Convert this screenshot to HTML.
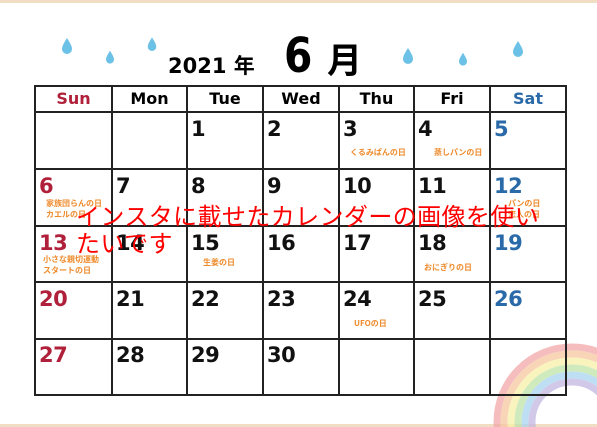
<!DOCTYPE html>
<html><head><meta charset="utf-8"><style>
*{margin:0;padding:0;box-sizing:border-box}
html,body{width:597px;height:427px;overflow:hidden}
body{background:#fff;position:relative;font-family:"Liberation Sans","Noto Sans CJK JP",sans-serif}
.a{position:absolute}
.n{position:absolute;font-weight:bold;font-size:21px;line-height:21px;color:#111;font-family:"DejaVu Sans","Liberation Sans",sans-serif;letter-spacing:-0.5px}
.r{color:#b0203a}.b{color:#2a6aa8}
.e{position:absolute;font-size:8px;font-weight:bold;color:#ee8a2a;line-height:11px;font-family:"Noto Sans CJK JP",sans-serif;white-space:nowrap}
.h{position:absolute;top:86px;height:26px;font-weight:bold;font-size:16px;line-height:26px;text-align:center;font-family:"DejaVu Sans",sans-serif}
</style></head><body>
<div class="a" style="left:0;top:0;width:597px;height:3px;background:#f1dcc4"></div>
<div class="a" style="left:0;top:424px;width:597px;height:3px;background:#f1dcc4"></div>
<svg class="a" style="left:0;top:0" width="597" height="427">
<defs><path id="dr" d="M0,-9 C3,-4 5,-1 5,2 A5,5 0 0 1 -5,2 C-5,-1 -3,-4 0,-9Z" fill="#6cc1e6"/></defs>
<use href="#dr" x="67" y="47"/>
<use href="#dr" x="110" y="58" transform="translate(110 58) scale(.8) translate(-110 -58)"/>
<use href="#dr" x="152" y="45" transform="translate(152 45) scale(.85) translate(-152 -45)"/>
<use href="#dr" x="408" y="57"/>
<use href="#dr" x="463" y="60" transform="translate(463 60) scale(.8) translate(-463 -60)"/>
<use href="#dr" x="518" y="50"/>
<g fill="none" stroke-width="7" opacity=".75">
<circle cx="572" cy="422" r="75" stroke="#f2a8a8"/>
<circle cx="572" cy="422" r="68" stroke="#f7c7a0"/>
<circle cx="572" cy="422" r="61" stroke="#f7f0a8"/>
<circle cx="572" cy="422" r="54" stroke="#bfe3a8"/>
<circle cx="572" cy="422" r="47" stroke="#a8d4ef"/>
<circle cx="572" cy="422" r="40" stroke="#c4b8e2"/>
</g>
<g stroke="#222" stroke-width="2" fill="none">
<rect x="35" y="86" width="531" height="309"/>
<line x1="35" y1="112" x2="566" y2="112"/>
<line x1="35" y1="169" x2="566" y2="169"/>
<line x1="35" y1="226" x2="566" y2="226"/>
<line x1="35" y1="282" x2="566" y2="282"/>
<line x1="35" y1="339" x2="566" y2="339"/>
<line x1="112" y1="86" x2="112" y2="395"/>
<line x1="187" y1="86" x2="187" y2="395"/>
<line x1="263" y1="86" x2="263" y2="395"/>
<line x1="339" y1="86" x2="339" y2="395"/>
<line x1="414" y1="86" x2="414" y2="395"/>
<line x1="490" y1="86" x2="490" y2="395"/>
</g></svg>
<div class="a" style="left:168px;top:50px;font-weight:bold;font-size:21px;font-family:'DejaVu Sans','Noto Sans CJK JP',sans-serif">2021 年</div>
<div class="a" style="left:284px;top:28px;font-weight:bold;font-size:48px;line-height:56px;font-family:'DejaVu Sans',sans-serif;transform:scaleX(.85);transform-origin:left">6</div>
<div class="a" style="left:327px;top:38px;font-weight:bold;font-size:35px;line-height:42px;font-family:'Noto Sans CJK JP',sans-serif">月</div>
<div class="h r" style="left:35px;width:77px">Sun</div>
<div class="h" style="left:112px;width:75px">Mon</div>
<div class="h" style="left:187px;width:76px">Tue</div>
<div class="h" style="left:263px;width:76px">Wed</div>
<div class="h" style="left:339px;width:75px">Thu</div>
<div class="h" style="left:414px;width:76px">Fri</div>
<div class="h b" style="left:490px;width:76px">Sat</div>

<div class="n" style="left:191px;top:119px">1</div>
<div class="n" style="left:267px;top:119px">2</div>
<div class="n" style="left:343px;top:119px">3</div>
<div class="n" style="left:418px;top:119px">4</div>
<div class="n b" style="left:494px;top:119px">5</div>
<div class="e" style="left:350px;top:147px">くるみぱんの日</div>
<div class="e" style="left:434px;top:147px">蒸しパンの日</div>

<div class="n r" style="left:39px;top:176px">6</div>
<div class="n" style="left:116px;top:176px">7</div>
<div class="n" style="left:191px;top:176px">8</div>
<div class="n" style="left:267px;top:176px">9</div>
<div class="n" style="left:343px;top:176px">10</div>
<div class="n" style="left:418px;top:176px">11</div>
<div class="n b" style="left:494px;top:176px">12</div>
<div class="e" style="left:46px;top:198px">家族団らんの日<br>カエルの日</div>
<div class="e" style="left:508px;top:198px">パンの日<br>恋人の日</div>

<div class="n r" style="left:39px;top:233px">13</div>
<div class="n" style="left:116px;top:233px">14</div>
<div class="n" style="left:191px;top:233px">15</div>
<div class="n" style="left:267px;top:233px">16</div>
<div class="n" style="left:343px;top:233px">17</div>
<div class="n" style="left:418px;top:233px">18</div>
<div class="n b" style="left:494px;top:233px">19</div>
<div class="e" style="left:43px;top:254px">小さな親切運動<br>スタートの日</div>
<div class="e" style="left:203px;top:257px">生姜の日</div>
<div class="e" style="left:424px;top:262px">おにぎりの日</div>

<div class="n r" style="left:39px;top:289px">20</div>
<div class="n" style="left:116px;top:289px">21</div>
<div class="n" style="left:191px;top:289px">22</div>
<div class="n" style="left:267px;top:289px">23</div>
<div class="n" style="left:343px;top:289px">24</div>
<div class="n" style="left:418px;top:289px">25</div>
<div class="n b" style="left:494px;top:289px">26</div>
<div class="e" style="left:354px;top:318px">UFOの日</div>

<div class="n r" style="left:39px;top:345px">27</div>
<div class="n" style="left:116px;top:345px">28</div>
<div class="n" style="left:191px;top:345px">29</div>
<div class="n" style="left:267px;top:345px">30</div>

<div class="a" style="left:76px;top:201px;width:500px;color:#ff0000;font-size:24px;line-height:27px;letter-spacing:0.4px;font-family:'Noto Sans CJK JP',sans-serif;white-space:nowrap">インスタに載せたカレンダーの画像を使い<br>たいです</div>
</body></html>
